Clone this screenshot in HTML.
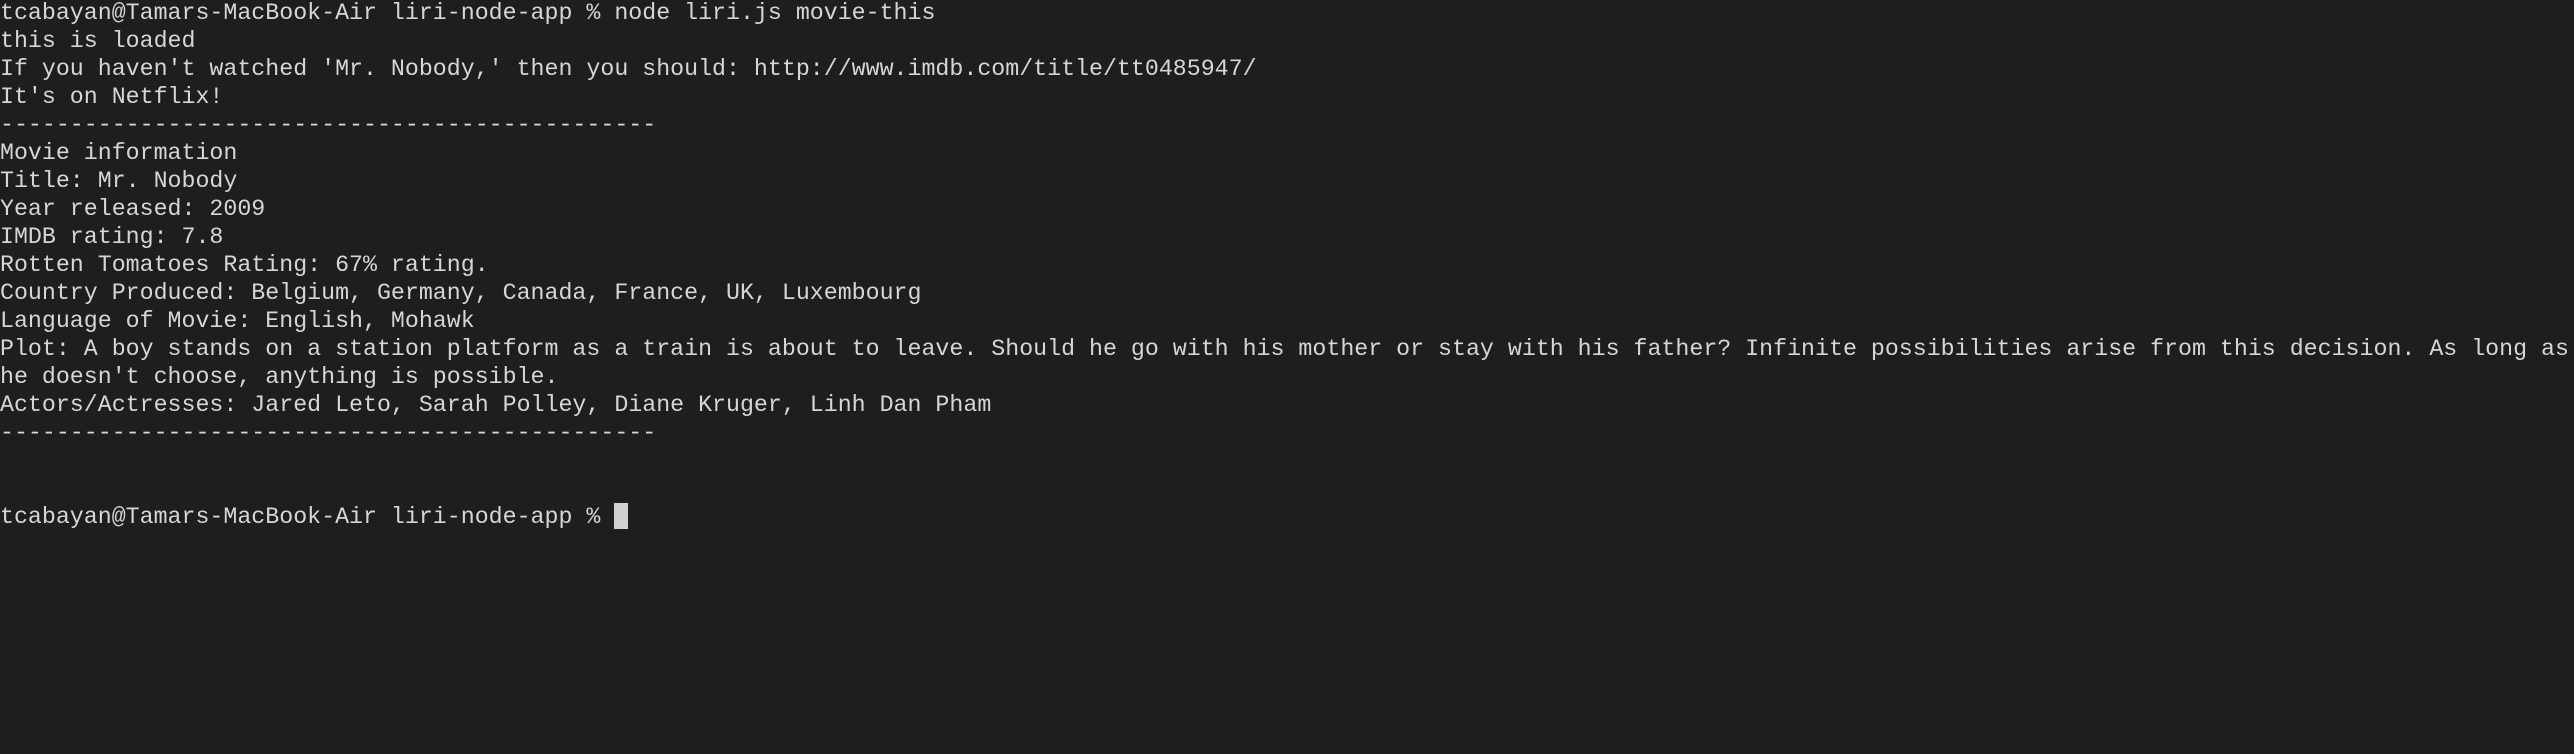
<!DOCTYPE html>
<html><head><meta charset="utf-8"><style>
html,body{margin:0;padding:0;background:#1e1e1e;width:2574px;height:754px;overflow:hidden}
pre{margin:0;position:relative;top:-1px;font-family:"Liberation Mono",monospace;font-size:23.27px;line-height:28px;color:#d6d6d6;white-space:pre}
.c{display:inline-block;width:14px;height:26px;background:#d0d0d0;vertical-align:-6px}
</style></head><body><pre>tcabayan@Tamars-MacBook-Air liri-node-app % node liri.js movie-this
this is loaded
If you haven't watched 'Mr. Nobody,' then you should: http://www.imdb.com/title/tt0485947/
It's on Netflix!
-----------------------------------------------
Movie information
Title: Mr. Nobody
Year released: 2009
IMDB rating: 7.8
Rotten Tomatoes Rating: 67% rating.
Country Produced: Belgium, Germany, Canada, France, UK, Luxembourg
Language of Movie: English, Mohawk
Plot: A boy stands on a station platform as a train is about to leave. Should he go with his mother or stay with his father? Infinite possibilities arise from this decision. As long as
he doesn't choose, anything is possible.
Actors/Actresses: Jared Leto, Sarah Polley, Diane Kruger, Linh Dan Pham
-----------------------------------------------


tcabayan@Tamars-MacBook-Air liri-node-app % <span class="c"></span></pre></body></html>
